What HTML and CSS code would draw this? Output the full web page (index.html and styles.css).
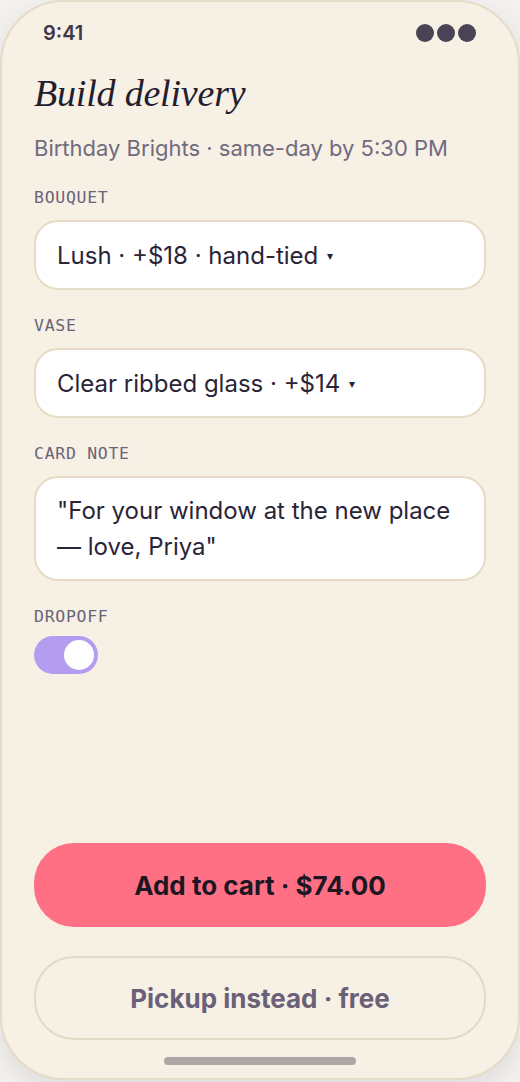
FILE: index.html
```html
<!DOCTYPE html>
<html lang="en">
<head>
<meta charset="utf-8">
<title>Build delivery</title>
<link rel="stylesheet" href="styles.css">
</head>
<body>
<div class="phone">
  <div class="status">
    <span class="time">9:41</span>
    <span class="dots"><i></i><i></i><i></i></span>
  </div>
  <div class="content">
    <h1 class="title">Build delivery</h1>
    <p class="subtitle">Birthday Brights · same-day by 5:30 PM</p>

    <div class="field">
      <div class="label">BOUQUET</div>
      <div class="box select">Lush · +$18 · hand-tied <span class="caret">▾</span></div>
    </div>
    <div class="field">
      <div class="label">VASE</div>
      <div class="box select">Clear ribbed glass · +$14 <span class="caret">▾</span></div>
    </div>
    <div class="field">
      <div class="label">CARD NOTE</div>
      <div class="box note">"For your window at the new place — love, Priya"</div>
    </div>
    <div class="field">
      <div class="label">DROPOFF</div>
      <div class="toggle"><span class="knob"></span></div>
    </div>

    <div class="actions">
      <button class="btn primary">Add to cart · $74.00</button>
      <button class="btn secondary">Pickup instead · free</button>
    </div>
  </div>
  <div class="home"></div>
</div>
</body>
</html>
```

FILE: styles.css
```css
* { box-sizing: border-box; }
html, body { margin: 0; padding: 0; }
body {
  background: #f3f2f1;
  width: 520px;
  height: 1082px;
  overflow: hidden;
  font-family: Inter, "Noto Sans", sans-serif;
}
.phone {
  width: 520px;
  height: 1080px;
  background: #f7f0e4;
  border: 2px solid #e5dcc7;
  border-radius: 64px;
  box-shadow: 0 8px 28px rgba(0,0,0,0.10);
  display: flex;
  flex-direction: column;
  overflow: hidden;
}
.status {
  display: flex;
  justify-content: space-between;
  align-items: center;
  padding: 19px 42px 0 41px;
  height: 43px;
}
.time {
  font-size: 20px;
  font-weight: 600;
  color: #3e3848;
  line-height: 22px;
}
.dots { display: flex; gap: 3px; }
.dots i {
  display: block;
  width: 18px;
  height: 18px;
  border-radius: 50%;
  background: #4a4255;
}
.content {
  flex: 1;
  display: flex;
  flex-direction: column;
  padding: 0 32px;
}
.title {
  margin: 24px 0 0;
  font-family: "Liberation Serif", serif;
  font-style: italic;
  font-weight: 400;
  font-size: 38px;
  line-height: 48px;
  color: #231d30;
  letter-spacing: -0.2px;
}
.subtitle {
  margin: 17px 0 0;
  font-size: 22px;
  line-height: 28px;
  color: #716a80;
}
.field {
  display: flex;
  flex-direction: column;
  margin-top: 26px;
}
.label {
  font-family: "DejaVu Sans Mono", monospace;
  font-size: 16.5px;
  line-height: 20px;
  letter-spacing: 0.7px;
  color: #6b6378;
  margin-bottom: 12px;
}
.box {
  background: #fff;
  border: 2px solid #e6dcc6;
  border-radius: 24px;
  font-size: 24px;
  color: #2a2437;
  padding: 0 21px;
}
.select {
  height: 70px;
  display: flex;
  align-items: center;
}
.caret {
  font-size: 12px;
  margin-left: 9px;
  color: #2a2437;
}
.note {
  height: 105px;
  padding-top: 15px;
  line-height: 36px;
}
.toggle {
  width: 64px;
  height: 38px;
  border-radius: 19px;
  background: #b49cf0;
  display: flex;
  align-items: center;
  justify-content: flex-end;
  padding: 0 4px;
  margin-top: -3px;
}
.knob {
  width: 30px;
  height: 30px;
  border-radius: 50%;
  background: #fff;
}
.actions {
  margin-top: auto;
  display: flex;
  flex-direction: column;
  gap: 29px;
}
.btn {
  width: 100%;
  height: 84px;
  border-radius: 40px;
  font-family: Inter, "Noto Sans", sans-serif;
  font-size: 26px;
  font-weight: 700;
  cursor: pointer;
}
.primary {
  background: #ff7085;
  border: none;
  color: #1c1722;
}
.secondary {
  background: transparent;
  border: 2px solid #e3dac6;
  color: #6a6178;
}
.home {
  align-self: center;
  width: 192px;
  height: 8px;
  border-radius: 4px;
  background: #aca6a5;
  margin: 17px 0 13px;
  flex: none;
}
```
